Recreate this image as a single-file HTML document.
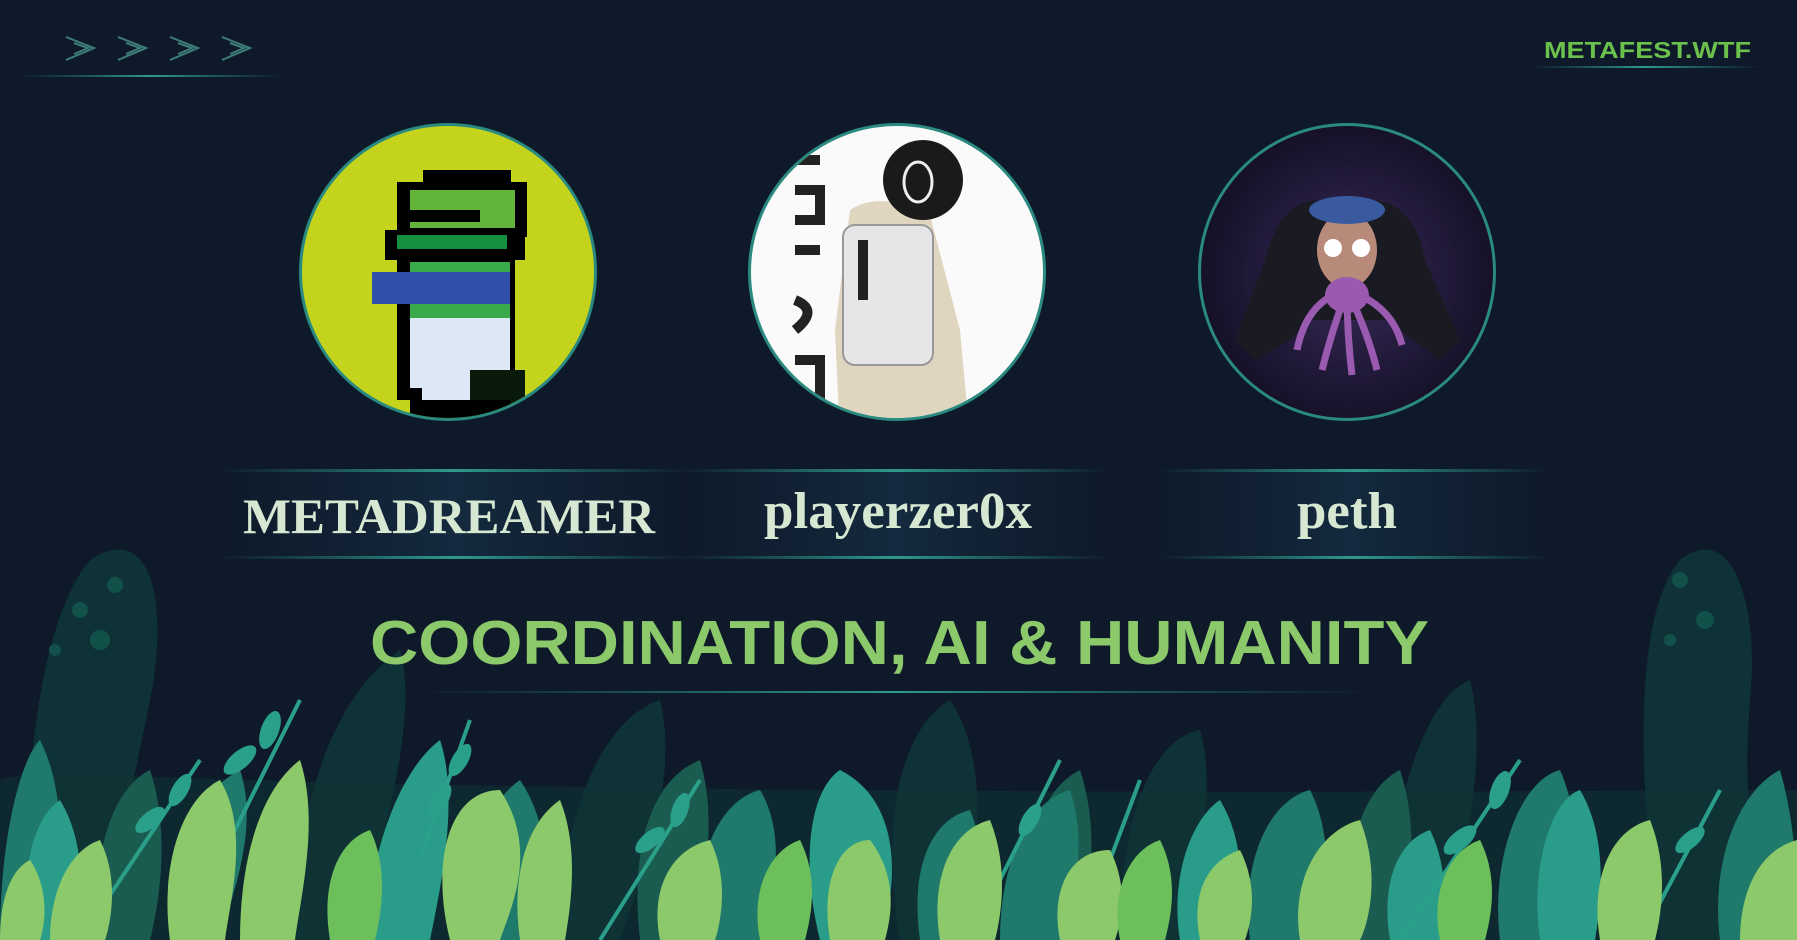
<!DOCTYPE html>
<html><head><meta charset="utf-8"><style>
html,body{margin:0;padding:0;background:#0e1a2a;overflow:hidden}
svg{display:block}
</style></head><body>
<svg width="1797" height="940" viewBox="0 0 1797 940" xmlns="http://www.w3.org/2000/svg">
<defs>
<linearGradient id="ln" x1="0" x2="1"><stop offset="0" stop-color="#2a8a80" stop-opacity="0"/><stop offset=".5" stop-color="#2f9a8c"/><stop offset="1" stop-color="#2a8a80" stop-opacity="0"/></linearGradient>
<linearGradient id="band" x1="0" x2="1"><stop offset="0" stop-color="#13243a" stop-opacity="0"/><stop offset=".5" stop-color="#142a3e"/><stop offset="1" stop-color="#13243a" stop-opacity="0"/></linearGradient>
<radialGradient id="space" cx=".5" cy=".5" r=".6"><stop offset="0" stop-color="#3a2a5a"/><stop offset=".6" stop-color="#1c1632"/><stop offset="1" stop-color="#0c0a18"/></radialGradient>
<clipPath id="c1"><circle cx="448" cy="272" r="146"/></clipPath>
<clipPath id="c2"><circle cx="897" cy="272" r="146"/></clipPath>
<clipPath id="c3"><circle cx="1347" cy="272" r="146"/></clipPath>
</defs>
<rect width="1797" height="940" fill="#0e1a2a"/>
<g fill="none" stroke="#3f7d78" stroke-width="2">
<path d="M66 37 L94 48 L66 60 M74 43 L88 48 L74 54"/>
<path d="M118 37 L146 48 L118 60 M126 43 L140 48 L126 54"/>
<path d="M170 37 L198 48 L170 60 M178 43 L192 48 L178 54"/>
<path d="M222 37 L250 48 L222 60 M230 43 L244 48 L230 54"/>
</g>
<rect x="20" y="75" width="262" height="2" fill="url(#ln)"/>
<text x="1544" y="58" font-family="Liberation Sans,sans-serif" font-weight="bold" font-size="23" fill="#6cc04c" textLength="207" lengthAdjust="spacingAndGlyphs">METAFEST.WTF</text>
<rect x="1530" y="66" width="230" height="2" fill="url(#ln)"/>

<circle cx="448" cy="272" r="149" fill="#2a8a80"/>
<g clip-path="url(#c1)">
<rect x="290" y="110" width="320" height="330" fill="#c4d41c"/>
<rect x="423" y="170" width="88" height="12" fill="#000"/>
<rect x="397" y="182" width="130" height="55" fill="#000"/>
<rect x="410" y="190" width="105" height="38" fill="#62b53a"/>
<rect x="410" y="210" width="70" height="12" fill="#000"/>
<rect x="385" y="230" width="140" height="30" fill="#000"/>
<rect x="397" y="235" width="110" height="14" fill="#149040"/>
<rect x="397" y="260" width="118" height="140" fill="#000"/>
<rect x="410" y="262" width="100" height="120" fill="#3aab4a"/>
<rect x="372" y="272" width="138" height="32" fill="#2f50a8"/>
<rect x="410" y="318" width="100" height="70" fill="#dce8f6"/>
<rect x="422" y="386" width="80" height="14" fill="#dce8f6"/>
<rect x="470" y="370" width="55" height="70" fill="#0a1a0a"/>
<rect x="410" y="400" width="100" height="20" fill="#000"/>
</g>
<circle cx="897" cy="272" r="149" fill="#2a8a80"/>
<g clip-path="url(#c2)">
<rect x="740" y="110" width="320" height="330" fill="#fafafa"/>
<path d="M795 160 h25 M795 190 h25 v30 h-25 M795 250 h25 M795 300 q25 10 0 30 M795 360 h25 v40" stroke="#222" stroke-width="10" fill="none"/>
<path d="M850 210 Q880 190 930 215 L960 330 L970 440 L840 440 L835 330 Z" fill="#e0d6c0"/>
<rect x="843" y="225" width="90" height="140" rx="12" fill="#e6e6e8" stroke="#999" stroke-width="2"/>
<rect x="858" y="240" width="10" height="60" fill="#222"/>
<circle cx="923" cy="180" r="40" fill="#1a1a1a"/>
<ellipse cx="918" cy="182" rx="14" ry="20" fill="none" stroke="#eee" stroke-width="3"/>
</g>
<circle cx="1347" cy="272" r="149" fill="#2a8a80"/>
<g clip-path="url(#c3)">
<rect x="1190" y="110" width="320" height="330" fill="url(#space)"/>
<path d="M1265 260 Q1280 200 1320 200 L1375 200 Q1415 205 1425 260 L1460 340 L1440 360 L1400 330 L1385 320 L1310 320 L1290 340 L1255 360 L1235 340 Z" fill="#1a1a22"/>
<ellipse cx="1347" cy="250" rx="30" ry="38" fill="#b88a7a"/>
<ellipse cx="1347" cy="210" rx="38" ry="14" fill="#3a5aa0"/>
<circle cx="1333" cy="248" r="9" fill="#fff"/><circle cx="1361" cy="248" r="9" fill="#fff"/>
<g stroke="#9a5ab0" stroke-width="7" fill="none"><path d="M1347 290 q-40 10 -50 60 M1347 290 q-15 40 -25 80 M1347 290 q0 45 5 85 M1347 290 q20 40 30 80 M1347 290 q45 15 55 55"/></g>
<ellipse cx="1347" cy="295" rx="22" ry="18" fill="#9a5ab0"/>
</g>

<rect x="220" y="471" width="470" height="86" fill="url(#band)"/>
<rect x="680" y="471" width="430" height="86" fill="url(#band)"/>
<rect x="1150" y="471" width="400" height="86" fill="url(#band)"/>
<rect x="220" y="469" width="470" height="3" fill="url(#ln)"/>
<rect x="220" y="556" width="470" height="3" fill="url(#ln)"/>
<rect x="680" y="469" width="430" height="3" fill="url(#ln)"/>
<rect x="680" y="556" width="430" height="3" fill="url(#ln)"/>
<rect x="1160" y="469" width="390" height="3" fill="url(#ln)"/>
<rect x="1160" y="556" width="390" height="3" fill="url(#ln)"/>
<g font-family="Liberation Serif,serif" font-weight="bold" fill="#d6e8d2">
<text x="243" y="533" font-size="50" textLength="412" lengthAdjust="spacingAndGlyphs">METADREAMER</text>
<text x="764" y="528" font-size="52" textLength="268" lengthAdjust="spacingAndGlyphs">playerzer0x</text>
<text x="1297" y="528" font-size="52" textLength="100" lengthAdjust="spacingAndGlyphs">peth</text>
</g>

<g fill="#0f3236">
<path d="M30 940 C20 780 40 620 90 560 C150 520 170 600 150 700 C130 800 110 870 130 940Z"/>
<path d="M1660 940 C1640 800 1630 620 1680 560 C1730 520 1760 600 1750 700 C1740 820 1760 880 1770 940Z"/>
<path d="M290 940 C300 800 330 700 400 650 C420 720 380 840 360 940Z"/>
<path d="M1380 940 C1390 820 1420 700 1470 680 C1490 760 1460 860 1450 940Z"/>
<path d="M900 940 C880 820 900 730 950 700 C990 760 980 860 960 940Z"/>
<path d="M560 940 C560 820 600 720 660 700 C680 780 640 880 620 940Z"/>
<path d="M1120 940 C1120 820 1150 740 1200 730 C1220 800 1190 880 1180 940Z"/>
<path d="M0 940 L0 780 C60 760 120 800 1797 790 L1797 940Z" opacity=".6"/>
</g>
<g fill="#12504a">
<circle cx="80" cy="610" r="8"/><circle cx="115" cy="585" r="8"/><circle cx="100" cy="640" r="10"/><circle cx="55" cy="650" r="6"/>
<circle cx="1680" cy="580" r="8"/><circle cx="1705" cy="620" r="9"/><circle cx="1670" cy="640" r="6"/>
</g>
<g fill="#1b5c50">
<path d="M640 940 C630 850 650 780 700 760 C720 830 700 900 690 940Z"/>
<path d="M1030 940 C1020 850 1040 790 1080 770 C1100 830 1090 900 1080 940Z"/>
<path d="M1350 940 C1340 860 1360 790 1400 770 C1420 830 1410 900 1400 940Z"/>
<path d="M100 940 C90 860 110 790 150 770 C170 830 160 900 150 940Z"/>
</g>
<g fill="#1f7a6c">
<path d="M0 940 C0 840 20 760 40 740 C70 800 60 880 55 940Z"/>
<path d="M170 940 C160 860 200 790 240 770 C260 830 230 900 220 940Z"/>
<path d="M470 940 C460 860 490 800 520 780 C560 840 540 900 530 940Z"/>
<path d="M700 940 C690 860 720 800 760 790 C790 840 770 910 760 940Z"/>
<path d="M1000 940 C1000 860 1030 800 1070 790 C1090 850 1070 910 1060 940Z"/>
<path d="M1250 940 C1240 860 1270 800 1310 790 C1340 850 1320 910 1310 940Z"/>
<path d="M1500 940 C1490 860 1520 780 1560 770 C1590 840 1570 910 1560 940Z"/>
<path d="M1720 940 C1710 860 1740 790 1780 770 C1800 840 1797 910 1797 940Z"/>
<path d="M920 940 C910 870 930 820 970 810 C990 860 980 910 975 940Z"/>
</g>
<g fill="#2a9d8a">
<path d="M365 940 C370 850 400 770 440 740 C460 800 440 890 430 940Z"/>
<path d="M820 940 C800 860 810 790 840 770 C900 800 900 880 880 940Z"/>
<path d="M1180 940 C1170 880 1190 820 1220 800 C1250 850 1240 910 1235 940Z"/>
<path d="M1540 940 C1530 870 1550 800 1580 790 C1610 840 1600 910 1595 940Z"/>
<path d="M30 940 C20 880 30 820 60 800 C90 850 80 910 75 940Z"/>
<path d="M1390 940 C1380 880 1400 840 1430 830 C1450 870 1445 920 1440 940Z"/>
</g>
<g stroke="#2aa08a" stroke-width="4" fill="none">
<path d="M80 940 L200 760"/><path d="M180 940 L300 700"/><path d="M600 940 L700 780"/><path d="M1080 940 L1140 780"/><path d="M1400 940 L1520 760"/><path d="M1640 940 L1720 790"/><path d="M420 860 L470 720"/><path d="M1000 880 L1060 760"/>
</g>
<g fill="#2aa08a">
<ellipse cx="150" cy="820" rx="18" ry="8" transform="rotate(-40 150 820)"/><ellipse cx="180" cy="790" rx="18" ry="8" transform="rotate(-60 180 790)"/>
<ellipse cx="240" cy="760" rx="20" ry="9" transform="rotate(-40 240 760)"/><ellipse cx="270" cy="730" rx="20" ry="9" transform="rotate(-70 270 730)"/>
<ellipse cx="650" cy="840" rx="18" ry="8" transform="rotate(-40 650 840)"/><ellipse cx="680" cy="810" rx="18" ry="8" transform="rotate(-70 680 810)"/>
<ellipse cx="1460" cy="840" rx="20" ry="9" transform="rotate(-40 1460 840)"/><ellipse cx="1500" cy="790" rx="20" ry="9" transform="rotate(-70 1500 790)"/>
<ellipse cx="1690" cy="840" rx="18" ry="8" transform="rotate(-40 1690 840)"/>
<ellipse cx="440" cy="800" rx="18" ry="8" transform="rotate(-60 440 800)"/><ellipse cx="460" cy="760" rx="18" ry="8" transform="rotate(-60 460 760)"/>
<ellipse cx="1030" cy="820" rx="18" ry="8" transform="rotate(-60 1030 820)"/>
</g>
<g fill="#8cc96a">
<path d="M170 940 C160 870 180 800 220 780 C250 830 230 900 225 940Z"/>
<path d="M240 940 C240 860 260 790 300 760 C320 820 300 900 295 940Z"/>
<path d="M450 940 C430 860 450 790 500 790 C540 850 510 910 500 940Z"/>
<path d="M520 940 C510 870 530 820 560 800 C580 850 570 910 565 940Z"/>
<path d="M830 940 C820 880 840 840 870 840 C900 880 890 920 885 940Z"/>
<path d="M940 940 C930 880 950 830 990 820 C1010 870 1000 920 995 940Z"/>
<path d="M1300 940 C1290 880 1320 830 1360 820 C1380 870 1370 920 1360 940Z"/>
<path d="M1600 940 C1590 880 1610 830 1650 820 C1670 870 1660 920 1655 940Z"/>
<path d="M0 940 C0 900 10 870 30 860 C50 890 45 925 40 940Z"/>
<path d="M1740 940 C1740 890 1760 850 1797 840 L1797 940Z"/>
<path d="M50 940 C50 890 70 850 100 840 C120 880 110 925 105 940Z"/>
<path d="M660 940 C650 890 670 850 710 840 C730 880 720 925 715 940Z"/>
<path d="M1060 940 C1050 890 1070 850 1110 850 C1130 890 1120 925 1115 940Z"/>
<path d="M1200 940 C1190 890 1210 860 1240 850 C1260 890 1250 925 1245 940Z"/>
</g>
<g fill="#6cbf5a">
<path d="M330 940 C320 880 340 840 370 830 C390 870 380 920 375 940Z"/>
<path d="M760 940 C750 890 770 850 800 840 C820 880 810 920 805 940Z"/>
<path d="M1120 940 C1110 890 1130 850 1160 840 C1180 880 1170 920 1165 940Z"/>
<path d="M1440 940 C1430 890 1450 850 1480 840 C1500 880 1490 920 1485 940Z"/>
</g>

<text x="370" y="664" font-family="Liberation Sans,sans-serif" font-weight="bold" font-size="62" fill="#8cc96a" textLength="1059" lengthAdjust="spacingAndGlyphs">COORDINATION, AI &amp; HUMANITY</text>
<rect x="420" y="691" width="950" height="2" fill="url(#ln)"/>
</svg>
</body></html>
